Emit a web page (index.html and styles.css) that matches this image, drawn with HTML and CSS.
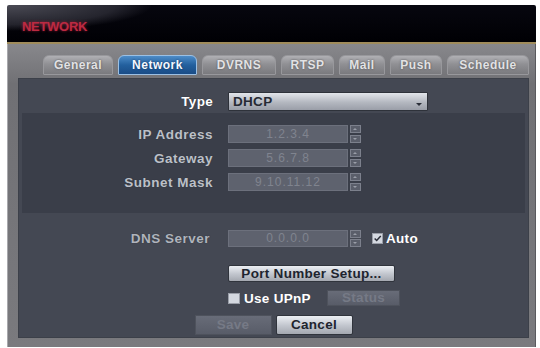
FILE: index.html
```html
<!DOCTYPE html>
<html>
<head>
<meta charset="utf-8">
<link rel="stylesheet" href="styles.css">
</head>
<body>
<div class="window">
  <div class="header"><span class="title">NETWORK</span></div>
  <div class="frame">
    <div class="tabs">
      <div class="tab t-general">General</div>
      <div class="tab t-network active">Network</div>
      <div class="tab t-dvrns">DVRNS</div>
      <div class="tab t-rtsp">RTSP</div>
      <div class="tab t-mail">Mail</div>
      <div class="tab t-push">Push</div>
      <div class="tab t-schedule">Schedule</div>
    </div>
    <div class="panel">
      <div class="row type-row">
        <span class="lbl lbl-type">Type</span>
        <div class="select">DHCP<span class="caret"></span></div>
      </div>
      <div class="static">
        <div class="row srow">
          <span class="lbl lbl-in">IP Address</span>
          <div class="field">1.2.3.4</div>
          <div class="spin"><span class="up"></span><span class="dn"></span></div>
        </div>
        <div class="row srow">
          <span class="lbl lbl-in">Gateway</span>
          <div class="field">5.6.7.8</div>
          <div class="spin"><span class="up"></span><span class="dn"></span></div>
        </div>
        <div class="row srow">
          <span class="lbl lbl-in">Subnet Mask</span>
          <div class="field">9.10.11.12</div>
          <div class="spin"><span class="up"></span><span class="dn"></span></div>
        </div>
      </div>
      <div class="row dns-row">
        <span class="lbl lbl-dns">DNS Server</span>
        <div class="field">0.0.0.0</div>
        <div class="spin"><span class="up"></span><span class="dn"></span></div>
        <span class="check checked"><svg width="11" height="11" viewBox="0 0 11 11"><path d="M2 5.5 L4.5 8 L9.5 2.5" fill="none" stroke="#2a2e38" stroke-width="1.8"/></svg></span>
        <span class="check-text">Auto</span>
      </div>
      <div class="row port-row">
        <div class="btn btn-light btn-port">Port Number Setup...</div>
      </div>
      <div class="row upnp-row">
        <span class="check"></span>
        <span class="check-text upnp-text">Use UPnP</span>
        <div class="btn btn-dis btn-status">Status</div>
      </div>
      <div class="actions">
        <div class="btn btn-dis btn-save">Save</div>
        <div class="btn btn-light btn-cancel">Cancel</div>
      </div>
    </div>
  </div>
</div>
</body>
</html>
```

FILE: styles.css
```css
html, body {
  margin: 0;
  padding: 0;
  background: #ffffff;
}
body {
  font-family: "Liberation Sans", Arial, sans-serif;
}
.window {
  margin: 5px 0 0 7px;
  width: 529px;
  height: 342px;
  display: flex;
  flex-direction: column;
}
.header {
  height: 37px;
  box-sizing: border-box;
  padding: 12px 0 0 15px;
  background:
    radial-gradient(ellipse 145px 26px at 0px 0px, rgba(78,78,88,0.95), rgba(50,50,60,0.7) 75%, rgba(0,0,0,0) 100%),
    linear-gradient(#07070f, #000004);
  border-radius: 2px 2px 0 0;
}
.title {
  font-size: 13px;
  font-weight: bold;
  color: #bc2a42;
  letter-spacing: -0.3px;
  text-shadow: 0 0 3px rgba(200,30,60,0.7);
}
.frame {
  flex: 1;
  border-top: 2px solid #a08c5c;
  background: linear-gradient(#88888c, #707074 40px, #7a7a7e);
  padding: 11px 7px 9px 11px;
  box-shadow: inset 1px 0 0 #a8a8ac, inset -1px 0 0 #5a5a5e;
  display: flex;
  flex-direction: column;
}
.tabs {
  display: flex;
  gap: 5px;
  padding-left: 25px;
  height: 20px;
  margin-bottom: 3px;
}
.tab {
  box-sizing: border-box;
  height: 20px;
  border-radius: 6px 6px 1px 1px;
  background: linear-gradient(#b0b0b4, #909094 45%, #7a7a7e);
  border: 1px solid #98989c;
  color: #e2e2e4;
  font-size: 12px;
  font-weight: bold;
  letter-spacing: 0.5px;
  text-align: center;
  line-height: 18px;
  text-shadow: 0 0 2px #48484c;
}
.tab.active {
  background: linear-gradient(#4d8cc8, #23609e 50%, #1a4c86);
  border: 1px solid #9cc0e4;
  color: #f4f8ff;
  text-shadow: 0 0 2px #10305a;
}
.t-general { width: 70px; }
.t-network { width: 79px; }
.t-dvrns { width: 74px; }
.t-rtsp { width: 53px; }
.t-mail { width: 46px; }
.t-push { width: 52px; }
.t-schedule { width: 82px; }

.panel {
  height: 260px;
  box-sizing: border-box;
  background: #444853;
  padding: 14px 0 3px 0;
  display: flex;
  flex-direction: column;
  box-shadow: inset 0 0 0 1px #3c4049;
}
.row {
  display: flex;
  align-items: center;
}
.lbl {
  text-align: right;
  font-weight: bold;
  font-size: 13px;
  letter-spacing: 0.5px;
  color: #c4c8d0;
  margin-right: 15px;
  text-shadow: 0 0 1px #2a2e36;
}
.lbl-type {
  width: 195px;
  color: #ffffff;
  font-size: 13.5px;
  letter-spacing: 0.3px;
}
.type-row {
  height: 19px;
}
.select {
  position: relative;
  box-sizing: border-box;
  width: 200px;
  height: 19px;
  background: linear-gradient(#e2e5ea, #b4b8c0 55%, #9a9ea8);
  border: 1px solid #2e323a;
  border-radius: 1px;
  font-size: 13.5px;
  font-weight: bold;
  color: #262a34;
  line-height: 17px;
  padding-left: 4px;
  letter-spacing: 0.3px;
}
.caret {
  position: absolute;
  right: 5px;
  bottom: 4px;
  width: 0;
  height: 0;
  border-left: 3px solid transparent;
  border-right: 3px solid transparent;
  border-top: 3px solid #2a2e38;
}
.static {
  margin: 2px 4px 0 4px;
  height: 100px;
  box-sizing: border-box;
  background: #3a3e49;
  padding-top: 12px;
  display: flex;
  flex-direction: column;
  gap: 6px;
}
.srow {
  height: 18px;
}
.lbl-in {
  width: 191px;
  color: #bcc0c8;
  font-size: 13.5px;
}
.field {
  box-sizing: border-box;
  width: 120px;
  height: 18px;
  background: #5e626e;
  border: 1px solid #6c707c;
  color: #80848f;
  font-size: 12px;
  text-align: center;
  line-height: 16px;
  letter-spacing: 1px;
}
.spin {
  margin-left: 2px;
  width: 11px;
  height: 18px;
  display: flex;
  flex-direction: column;
  justify-content: space-between;
}
.spin span {
  box-sizing: border-box;
  height: 8px;
  background: #5a5e6a;
  border: 1px solid #7c808c;
  position: relative;
}
.spin .up::after, .spin .dn::after {
  content: "";
  position: absolute;
  left: 2px;
  top: 2px;
  border-left: 2.5px solid transparent;
  border-right: 2.5px solid transparent;
}
.spin .up::after { border-bottom: 2px solid #9a9ea8; }
.spin .dn::after { border-top: 2px solid #9a9ea8; }

.dns-row {
  margin-top: 17px;
  height: 17px;
}
.dns-row .field {
  height: 17px;
  line-height: 15px;
}
.dns-row .spin {
  height: 17px;
}
.lbl-dns {
  width: 192px;
  margin-right: 18px;
  color: #b0b4bc;
  font-size: 13.5px;
}
.check {
  box-sizing: border-box;
  width: 11px;
  height: 11px;
  background: #d4d8e0;
  border: 1px solid #9a9ea8;
  display: flex;
  align-items: center;
  justify-content: center;
}
.check svg { display: block; }
.dns-row .check {
  margin-left: 11px;
}
.check-text {
  margin-left: 3px;
  font-size: 13.5px;
  font-weight: bold;
  color: #ffffff;
  letter-spacing: 0.3px;
}
.btn {
  box-sizing: border-box;
  text-align: center;
  font-size: 13.5px;
  font-weight: bold;
  letter-spacing: 0.3px;
}
.btn-light {
  background: linear-gradient(#eceff3, #c4c8d0 50%, #a4a8b0);
  border: 1px solid #30343c;
  color: #20242e;
  border-radius: 2px;
}
.btn-dis {
  background: linear-gradient(#686c78, #585c68);
  border: 1px solid #4e525c;
  color: #767a86;
}
.port-row {
  margin-top: 18px;
  padding-left: 210px;
}
.btn-port {
  width: 167px;
  height: 17px;
  line-height: 15px;
}
.upnp-row {
  margin-top: 8px;
  height: 16px;
  padding-left: 210px;
}
.upnp-row .check {
  width: 12px;
  height: 11px;
}
.upnp-text {
  width: 80px;
  margin-left: 4px;
}
.btn-status {
  width: 73px;
  height: 16px;
  line-height: 14px;
  margin-left: 3px;
}
.actions {
  margin-top: 9px;
  display: flex;
  justify-content: center;
  gap: 4px;
}
.btn-save, .btn-cancel {
  width: 77px;
  height: 20px;
  line-height: 18px;
}
```
